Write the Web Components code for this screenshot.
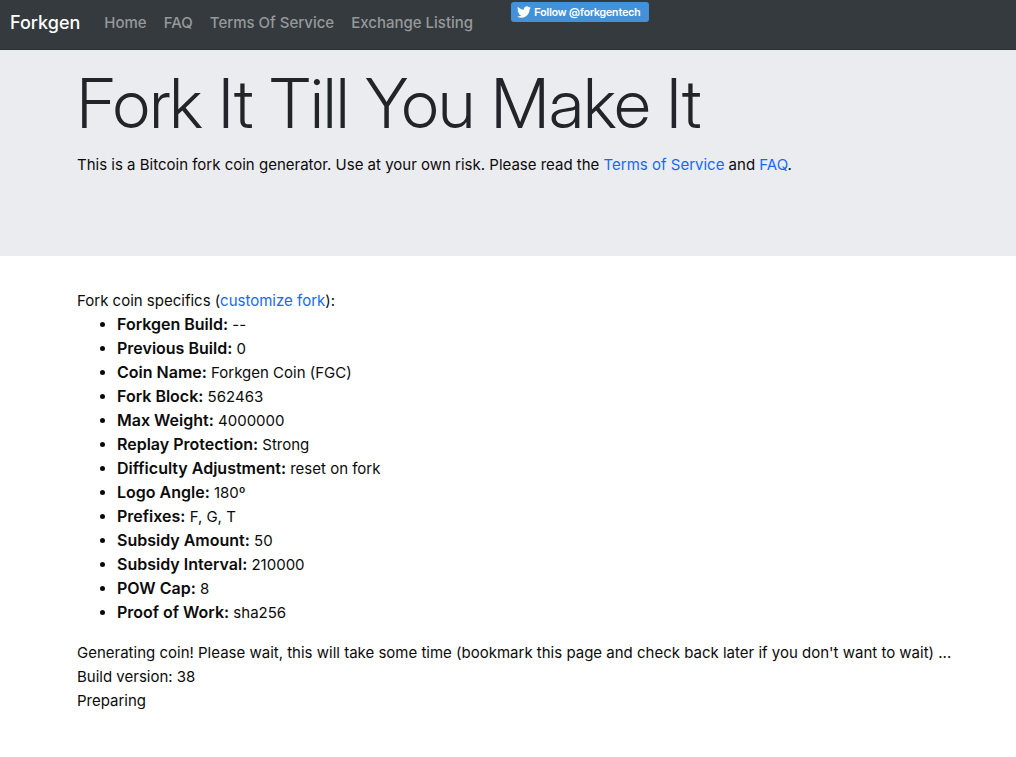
<!DOCTYPE html>
<html lang="en">
<head>
<meta charset="utf-8">
<meta name="viewport" content="width=device-width, initial-scale=1">
<title>Forkgen</title>
<style>
body { margin: 0; background: #fff; color: #0b0b0b; font: 15px/24px Inter, "Liberation Sans", sans-serif; }
</style>
</head>
<body>
<fork-app></fork-app>

<template id="nav-bar">
  <style>
    :host { display: block; background: #353a3e; border-bottom: 1px solid #2b2f33; }
    nav { display: flex; align-items: flex-start; height: 49px; padding: 0 10px; box-sizing: border-box; font-weight: 500; }
    .brand { color: #fff; font-size: 18px; line-height: 46px; text-decoration: none; margin-right: 24px; }
    .links { display: flex; gap: 17px; margin-right: 38px; }
    .follow { padding-top: 2px; }
  </style>
  <nav aria-label="Main">
    <a class="brand" href="#">Forkgen</a>
    <div class="links"><slot></slot></div>
    <div class="follow"><slot name="follow"></slot></div>
  </nav>
</template>

<template id="nav-item">
  <style>
    :host { display: block; }
    a { color: #96999b; line-height: 46px; text-decoration: none; white-space: nowrap; }
  </style>
  <a href="#"><slot></slot></a>
</template>

<template id="follow-button">
  <style>
    :host { display: block; }
    a { display: flex; align-items: center; gap: 3px; height: 20px; padding: 0 8px 0 6px; box-sizing: border-box;
        border-radius: 3px; background: #4392d9; color: #fff; font: 600 11px/20px "Inter Display", Inter, sans-serif;
        text-decoration: none; white-space: nowrap; }
    svg { width: 14px; height: 14px; fill: #fff; }
  </style>
  <a href="#">
    <svg viewBox="0 0 24 24" aria-hidden="true"><path d="M23.95 4.57a10 10 0 0 1-2.82.77 4.96 4.96 0 0 0 2.16-2.72c-.95.56-2 .96-3.13 1.19a4.92 4.92 0 0 0-8.38 4.48C7.69 8.1 4.07 6.13 1.64 3.16a4.82 4.82 0 0 0-.67 2.48c0 1.71.87 3.21 2.19 4.1a4.9 4.9 0 0 1-2.23-.62v.06a4.92 4.92 0 0 0 3.95 4.83 5 5 0 0 1-2.21.08 4.94 4.94 0 0 0 4.6 3.42A9.87 9.87 0 0 1 0 19.54a13.99 13.99 0 0 0 7.55 2.21c9.05 0 14-7.5 14-13.98 0-.21 0-.42-.02-.63a9.94 9.94 0 0 0 2.42-2.57z"/></svg>
    <span><slot></slot></span>
  </a>
</template>

<template id="hero-banner">
  <style>
    :host { display: block; background: #ebecf0; padding: 10px 28px 79px 77px; }
    h1 { margin: 0 0 7px; color: #212529; font: 300 68px/86px "Inter Display", Inter, sans-serif; }
    p { margin: 0; }
  </style>
  <h1><slot name="title"></slot></h1>
  <p><slot></slot></p>
</template>

<template id="text-link"><style>
    :host { display: inline; }
    a { color: #1569fa; text-decoration: none; }
  </style><a href="#"><slot></slot></a></template>

<template id="coin-specs">
  <style>
    :host { display: block; margin-bottom: 16px; }
    ul { margin: 0; padding-left: 40px; }
    b { font-size: 16px; line-height: 16px; font-weight: 600; }
  </style>
  <slot></slot>
  <ul></ul>
</template>

<template id="build-status">
  <style>
    :host { display: block; }
    p { margin: 0; }
  </style>
  <p>Generating coin! Please wait, this will take some time (bookmark this page and check back later if you don't want to wait) ...</p>
  <p>Build version: 38</p>
  <p>Preparing</p>
</template>

<template id="fork-app">
  <style>
    :host { display: block; }
    main { padding: 33px 28px 32px 77px; }
  </style>
  <nav-bar>
    <nav-item>Home</nav-item>
    <nav-item>FAQ</nav-item>
    <nav-item>Terms Of Service</nav-item>
    <nav-item>Exchange Listing</nav-item>
    <follow-button slot="follow">Follow @forkgentech</follow-button>
  </nav-bar>
  <hero-banner>
    <span slot="title">Fork It Till You Make It</span>
    This is a Bitcoin fork coin generator. Use at your own risk. Please read the <text-link>Terms of Service</text-link> and <text-link>FAQ</text-link>.
  </hero-banner>
  <main>
    <coin-specs>Fork coin specifics (<text-link>customize fork</text-link>):</coin-specs>
    <build-status></build-status>
  </main>
</template>

<script>
class TemplateElement extends HTMLElement {
  constructor() {
    super();
    const template = document.getElementById(this.localName);
    this.attachShadow({ mode: "open" }).append(document.importNode(template.content, true));
  }
}
class CoinSpecs extends TemplateElement {
  static specs = [
    ["Forkgen Build", "--"],
    ["Previous Build", "0"],
    ["Coin Name", "Forkgen Coin (FGC)"],
    ["Fork Block", "562463"],
    ["Max Weight", "4000000"],
    ["Replay Protection", "Strong"],
    ["Difficulty Adjustment", "reset on fork"],
    ["Logo Angle", "180º"],
    ["Prefixes", "F, G, T"],
    ["Subsidy Amount", "50"],
    ["Subsidy Interval", "210000"],
    ["POW Cap", "8"],
    ["Proof of Work", "sha256"]
  ];
  connectedCallback() {
    this.shadowRoot.querySelector("ul").replaceChildren(...CoinSpecs.specs.map(([name, value]) => {
      const item = document.createElement("li");
      const label = document.createElement("b");
      label.textContent = name + ":";
      item.append(label, " " + value);
      return item;
    }));
  }
}
customElements.define("nav-bar", class extends TemplateElement {});
customElements.define("nav-item", class extends TemplateElement {});
customElements.define("follow-button", class extends TemplateElement {});
customElements.define("hero-banner", class extends TemplateElement {});
customElements.define("text-link", class extends TemplateElement {});
customElements.define("coin-specs", CoinSpecs);
customElements.define("build-status", class extends TemplateElement {});
customElements.define("fork-app", class extends TemplateElement {});
</script>
</body>
</html>
